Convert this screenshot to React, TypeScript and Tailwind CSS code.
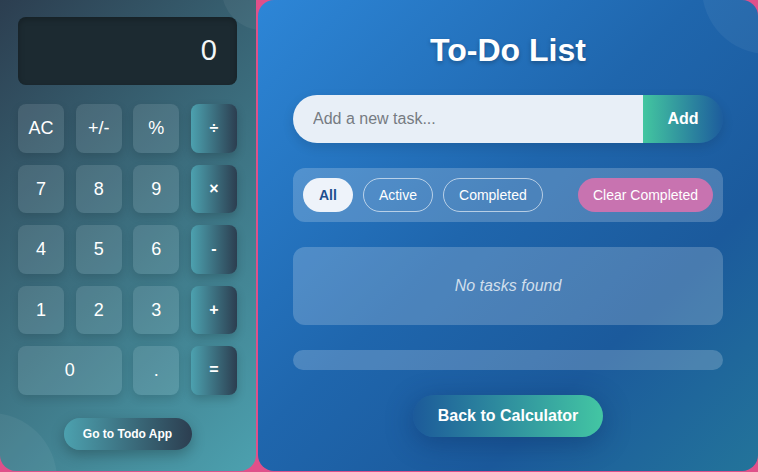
import React from "react";

const keys = [
  { label: "AC", op: false },
  { label: "+/-", op: false },
  { label: "%", op: false },
  { label: "÷", op: true },
  { label: "7", op: false },
  { label: "8", op: false },
  { label: "9", op: false },
  { label: "×", op: true },
  { label: "4", op: false },
  { label: "5", op: false },
  { label: "6", op: false },
  { label: "-", op: true },
  { label: "1", op: false },
  { label: "2", op: false },
  { label: "3", op: false },
  { label: "+", op: true },
  { label: "0", op: false, wide: true },
  { label: ".", op: false },
  { label: "=", op: true },
];

const Calculator = () => {
  return (
    <div className="relative w-[256px] h-[471px] shrink-0 overflow-hidden rounded-b-2xl bg-[linear-gradient(135deg,#2c3e50,#4ca1af)] pl-[18px] pr-[19px] pt-[17px]">
      {/* decorative circles */}
      <div className="pointer-events-none absolute -right-[46px] -top-[50px] size-[80px] rounded-full bg-white/5" />
      <div className="pointer-events-none absolute -left-[77px] top-[413px] size-[134px] rounded-full bg-white/5" />

      <div className="relative flex h-[68px] items-center justify-end rounded-lg bg-[#1c2a31] pr-5 text-[29px] text-[#f4f6f7] shadow-[inset_0_2px_6px_rgba(0,0,0,0.25)]">
        0
      </div>

      <div className="relative mt-[19px] grid grid-cols-4 gap-x-[11.5px] gap-y-[12px]">
        {keys.map((k) => (
          <button
            key={k.label}
            className={
              k.op
                ? "h-[48.5px] rounded-lg bg-[linear-gradient(90deg,#4ca1af,#2c3e50)] text-base font-bold text-white shadow-[0_4px_10px_rgba(0,0,0,0.18)]"
                : k.wide
                ? "col-span-2 h-[48.5px] rounded-lg bg-white/10 text-lg text-white shadow-[0_4px_10px_rgba(0,0,0,0.12)]"
                : "h-[48.5px] rounded-lg bg-white/10 text-lg text-white shadow-[0_4px_10px_rgba(0,0,0,0.12)]"
            }
          >
            {k.label}
          </button>
        ))}
      </div>

      <div className="relative mt-[23px] flex justify-center">
        <button className="h-8 w-32 rounded-full bg-[linear-gradient(90deg,#4ca1af,#2c3e50)] text-xs font-bold text-white shadow-[0_5px_14px_rgba(0,0,0,0.25)]">
          Go to Todo App
        </button>
      </div>
    </div>
  );
};

const filters = ["All", "Active", "Completed"];

const TodoApp = () => {
  return (
    <div className="relative flex h-[471px] w-[500px] shrink-0 flex-col overflow-hidden rounded-2xl bg-[linear-gradient(135deg,#2d86d7_0%,#1f66ad_45%,#1b5a9c_72%,#23749a_100%)] px-[35px] pt-[32px]">
      <div className="pointer-events-none absolute -right-[76px] -top-[78px] size-[132px] rounded-full bg-white/5" />

      <h1 className="relative text-center text-[32px] font-bold leading-[37px] text-white [text-shadow:0_2px_4px_rgba(0,0,0,0.25)]">
        To-Do List
      </h1>

      <div className="relative mt-[26px] flex h-12 rounded-full shadow-[0_4px_12px_rgba(0,0,0,0.12)]">
        <input
          className="h-12 flex-1 rounded-l-full bg-[#e8eff7] pl-5 text-base text-gray-700 outline-none placeholder:text-[#767b82]"
          placeholder="Add a new task..."
        />
        <button className="h-12 w-20 rounded-r-full bg-[linear-gradient(90deg,#43c6a0,#1d5c9d)] text-base font-bold text-white">
          Add
        </button>
      </div>

      <div className="relative mt-[25px] flex h-[54px] items-center justify-between rounded-xl bg-white/20 px-[10px]">
        <div className="flex gap-[10px]">
          {filters.map((f, i) => (
            <button
              key={f}
              className={
                i === 0
                  ? "h-[34px] rounded-full bg-[#eef3fa] px-4 text-sm font-bold text-[#1d4f8f]"
                  : "h-[34px] rounded-full border border-white/60 px-[15px] text-sm text-white"
              }
            >
              {f}
            </button>
          ))}
        </div>
        <button className="h-[34px] rounded-full bg-[#c873b0] px-[15px] text-sm text-white">
          Clear Completed
        </button>
      </div>

      <div className="relative mt-[25px] flex h-[78px] items-center justify-center rounded-xl bg-white/20">
        <span className="text-base italic text-white/75">No tasks found</span>
      </div>

      <div className="relative mt-[25px] h-5 rounded-full bg-white/20" />

      <div className="relative mt-[25px] flex justify-center">
        <button className="h-[42px] w-[190px] rounded-full bg-[linear-gradient(90deg,#1c5a9a,#43c6a3)] text-base font-bold text-white shadow-[0_6px_28px_rgba(10,40,90,0.4)]">
          Back to Calculator
        </button>
      </div>
    </div>
  );
};

export default function App() {
  return (
    <div className="flex h-[472px] w-[758px] gap-[2px] overflow-hidden bg-[#e0508a] font-['Liberation_Sans',Arial,sans-serif]">
      <Calculator />
      <TodoApp />
    </div>
  );
}
